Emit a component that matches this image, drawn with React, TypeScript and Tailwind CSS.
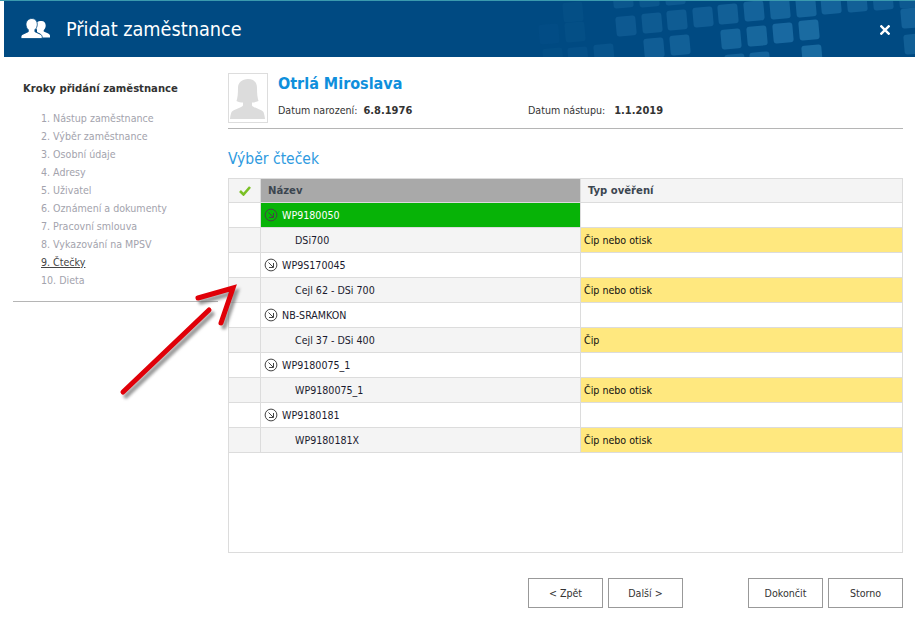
import React from 'react';

const steps = [
    '1. Nástup zaměstnance',
    '2. Výběr zaměstnance',
    '3. Osobní údaje',
    '4. Adresy',
    '5. Uživatel',
    '6. Oznámení a dokumenty',
    '7. Pracovní smlouva',
    '8. Vykazování na MPSV',
    '9. Čtečky',
    '10. Dieta',
];

const rows = [
    { reader: 'WP9180050', device: 'DSi700', type: 'Čip nebo otisk', active: true },
    { reader: 'WP9S170045', device: 'Cejl 62 - DSi 700', type: 'Čip nebo otisk' },
    { reader: 'NB-SRAMKON', device: 'Cejl 37 - DSi 400', type: 'Čip' },
    { reader: 'WP9180075_1', device: 'WP9180075_1', type: 'Čip nebo otisk' },
    { reader: 'WP9180181', device: 'WP9180181X', type: 'Čip nebo otisk' },
];

// x, y, opacity of the header tiles
const tiles = [
    [563, 2, 0.1], [539, 24, 0.06], [565, 22, 0.1], [543, 48, 0.08], [568, 47, 0.12], [594, 44, 0.2],
    [613, -12, 0.25], [639, -13, 0.25], [665, -15, 0.3],
    [616, 16, 0.3], [642, 13, 0.32], [667, 10, 0.35], [693, 7, 0.38], [718, 4, 0.42], [744, 1, 0.48],
    [770, -1, 0.5], [796, -3, 0.5], [821, -6, 0.48], [847, -8, 0.42], [873, -10, 0.38], [899, -12, 0.3],
    [644, 38, 0.38], [670, 35, 0.42], [721, 29, 0.5], [747, 26, 0.55], [773, 23, 0.6], [799, 20, 0.62],
    [725, 54, 0.42], [750, 52, 0.48], [802, 45, 0.62], [901, 8, 0.45], [904, 34, 0.4],
];

const HeaderTiles = () => (
    <svg className="absolute left-[-4px] top-[-1px]" width="915" height="57" viewBox="0 0 915 57">
        {tiles.map(([x, y, o]) => (
            <rect key={`${x}-${y}`} x={x} y={y} width="20" height="20" rx="3" fill="#2a7fb5" opacity={o}
                transform={`rotate(-5 ${x + 10} ${y + 10})`} />
        ))}
    </svg>
);

const PeopleIcon = () => (
    <svg width="30" height="22" viewBox="0 0 30 22" fill="#fff">
        <path d="M20.5 3c2.600 0 4.200 2 4.200 4.600 0 2-1 3.600-2 4.600v1.400l4.500 2c1 .5 1.800 1.200 1.800 2.200v1.700h-8.200c0-2.200-1-3.400-3-4.400l-1.800-.9v-2.400c-1-1-1.600-2.600-1.600-4.200C14.400 5 16.500 3 20.500 3z" />
        <path d="M11 .500c3.400 0 5.300 2.600 5.300 5.700 0 2.400-1 4.300-2.400 5.500v2l5.300 2.500c1.200.6 2 1.400 2 2.600v1.700H0v-1.700c0-1.200.8-2 2-2.600l5.300-2.500v-2C5.900 10.500 5 8.600 5 6.200 5 3.100 7.600.500 11 .500z" stroke="#004a82" strokeWidth="0.8" />
    </svg>
);

const ArrowCircle = () => (
    <svg width="14" height="14" viewBox="0 0 14 14" fill="none" stroke="#444" className="shrink-0">
        <circle cx="7" cy="7" r="5.900" strokeWidth="1" />
        <path d="M4.500 4.500 9 9M5 9.500h4.500v-4.500" strokeWidth="1" />
    </svg>
);

const Avatar = () => (
    <svg width="38" height="48" viewBox="0 0 38 48" fill="#dcdcdc">
        <path d="M19 5c6 0 9 3.500 9 9 0 6 .5 10 1.500 13-2 1-4.500 1.500-6.500 1.500v3c1 2 9 4 11 6 1 1 1.500 3.500 2 7.500H1c.5-4 1-6.500 2-7.500 2-2 10-4 11-6v-3c-2 0-4.500-.5-6.500-1.500C8.500 24 9 20 9 14c0-5.500 4-9 10-9z" />
    </svg>
);

const RedArrow = () => (
    <svg className="absolute left-[110px] top-[275px] pointer-events-none" width="140" height="130" viewBox="0 0 140 130" fill="none">
        <g className="blur-[1.500px]" stroke="#555" strokeOpacity="0.6" strokeWidth="5" strokeLinecap="round" strokeLinejoin="miter" transform="translate(3 4)">
            <path d="M13 117 99 35" />
            <path d="M88 23 123 13 111 48" />
        </g>
        <g stroke="#e00008" strokeWidth="5" strokeLinecap="round" strokeLinejoin="miter">
            <path d="M13 117 99 35" />
            <path d="M88 23 123 13 111 48" />
        </g>
    </svg>
);

const Button = ({ label, className = '' }: { label: string; className?: string }) => (
    <button className={`h-[30px] w-[75px] border border-[#999] bg-white pt-px text-[#333] ${className}`}>{label}</button>
);

const App: React.FC = () => {
    return (
        <div className="relative w-[915px] h-[618px] overflow-hidden bg-white text-[10.600px] text-[#333] font-['DejaVu_Sans_Condensed','DejaVu_Sans',sans-serif]">
            <div className="h-px bg-[#3a9aae]" />
            <header className="relative ml-1 h-14 bg-[#004a82] flex items-center overflow-hidden">
                <HeaderTiles />
                <div className="relative ml-[17px] flex items-center">
                    <PeopleIcon />
                </div>
                <h1 className="relative ml-[15px] mt-[2px] text-[19.700px] text-white">Přidat zaměstnance</h1>
                <svg className="absolute right-[25px] top-[24px]" width="10" height="10" viewBox="0 0 10 10" stroke="#fff" strokeWidth="2.400">
                    <path d="M.5.500l9 9M9.500.500l-9 9" />
                </svg>
            </header>

            <div className="flex">
                <aside className="w-[205px] ml-[13px] mr-[10px] h-[245px] border-b border-[#b5b5b5]">
                    <div className="ml-[10px] mt-[24px] text-[11.200px] font-bold text-[#333]">Kroky přidání zaměstnance</div>
                    <ol className="ml-[28px] mt-[11px]">
                        {steps.map((step) => (
                            <li key={step} className={`h-[18px] leading-[18px] ${step === '9. Čtečky' ? 'underline text-[#444]' : 'text-[#a3a3ad]'}`}>
                                {step}
                            </li>
                        ))}
                    </ol>
                </aside>

                <main className="w-[675px]">
                    <div className="flex h-[72px] border-b border-[#b5b5b5] pt-[16px]">
                        <div className="w-10 h-[50px] border border-[#ddd] flex items-end justify-center overflow-hidden">
                            <Avatar />
                        </div>
                        <div className="ml-[10px]">
                            <div className="mt-px text-[16px] leading-[20px] font-bold text-[#0f8fdc]">Otrlá Miroslava</div>
                            <div className="flex mt-[8px] leading-[16px]">
                                <div className="w-[250px]">Datum narození:<b className="ml-[6px] text-[11px]">6.8.1976</b></div>
                                <div>Datum nástupu:<b className="ml-[9px] text-[11px]">1.1.2019</b></div>
                            </div>
                        </div>
                    </div>

                    <h2 className="mt-[20px] h-[29px] leading-[20px] text-[15.500px] text-[#2f9be0]">Výběr čteček</h2>

                    <div className="h-[375px] border border-[#dcdcdc]">
                        <div className="flex h-6 border-b border-[#dcdcdc] text-[11.200px] font-bold">
                            <div className="w-8 border-r border-[#dcdcdc] bg-[#f4f4f4] flex items-center justify-center">
                                <svg width="12" height="10" viewBox="0 0 12 10" fill="none" stroke="#7ac025" strokeWidth="2.600">
                                    <path d="M1 5l3.500 3.500L11 1" />
                                </svg>
                            </div>
                            <div className="w-[320px] border-r border-[#dcdcdc] bg-[#a9a9a9] flex items-center pl-[7px] pt-px text-[#3c4650]">Název</div>
                            <div className="flex-1 bg-[#f4f4f4] flex items-center pl-[7px] pt-px text-[#3c4650]">Typ ověření</div>
                        </div>
                        {rows.map((row) => (
                            <React.Fragment key={row.reader}>
                                <div className="flex h-[25px] border-b border-[#dcdcdc]">
                                    <div className="w-8 border-r border-[#dcdcdc]" />
                                    <div className={`w-[320px] border-r border-[#dcdcdc] flex items-center gap-[4px] pl-[3px] ${row.active ? 'bg-[#07b307] text-white' : 'text-[#1a1a2e]'}`}>
                                        <ArrowCircle />
                                        <span className="pt-px">{row.reader}</span>
                                    </div>
                                    <div className="flex-1" />
                                </div>
                                <div className="flex h-[25px] border-b border-[#dcdcdc] bg-[#f4f4f4]">
                                    <div className="w-8 border-r border-[#dcdcdc]" />
                                    <div className="w-[320px] border-r border-[#dcdcdc] flex items-center pl-[34px] pt-px text-[#1a1a2e]">{row.device}</div>
                                    <div className="flex-1 bg-[#ffe87f] flex items-center pl-[3px] pt-px text-[#111]">{row.type}</div>
                                </div>
                            </React.Fragment>
                        ))}
                    </div>

                    <div className="flex mt-[25px]">
                        <Button label="< Zpět" className="ml-[300px]" />
                        <Button label="Další >" className="ml-[5px]" />
                        <Button label="Dokončit" className="ml-[65px]" />
                        <Button label="Storno" className="ml-[5px]" />
                    </div>
                </main>
            </div>

            <RedArrow />
        </div>
    );
};

export default App;
